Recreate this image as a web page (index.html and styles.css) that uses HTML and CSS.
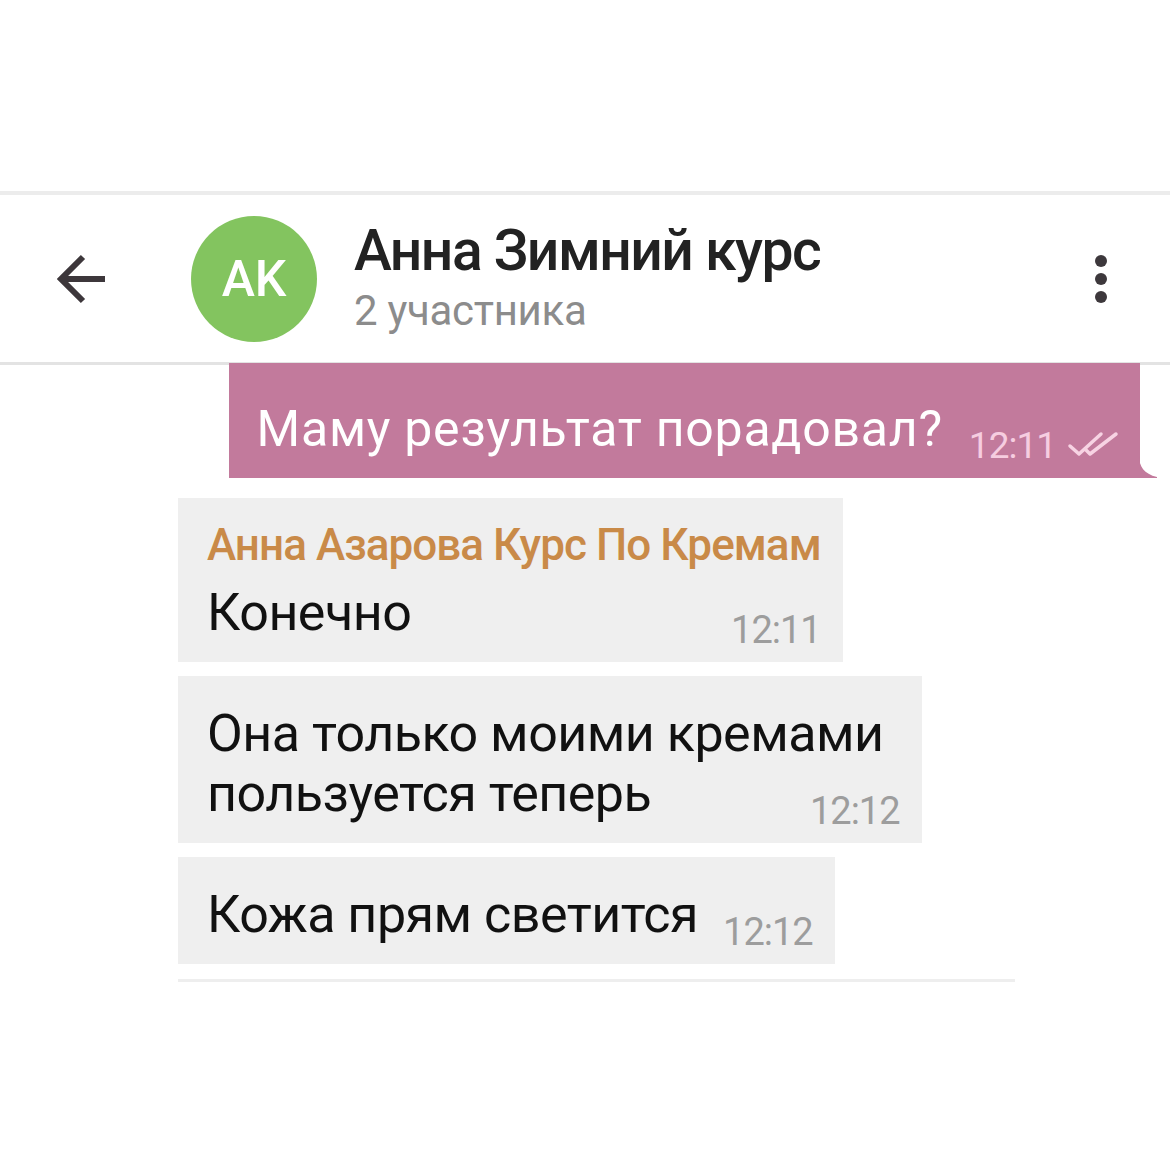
FILE: index.html
```html
<!DOCTYPE html>
<html lang="ru">
    <head>
        <meta charset="UTF-8">
        <meta name="viewport" content="width=device-width, initial-scale=1.0">
        <title>Анна Зимний курс</title>
        <link rel="stylesheet" href="styles.css">
    </head>
    <body>
        <div class="chat">
            <div class="header">
                <svg class="back" width="52" height="50" viewBox="0 0 52 50">
                    <path d="M50 25 H6 M28 3 L6 25 L28 47" fill="none" stroke="#3d373b" stroke-width="6" stroke-linejoin="miter"/>
                </svg>
                <div class="avatar">AK</div>
                <div class="title-block">
                    <h1>Анна Зимний курс</h1>
                    <p>2 участника</p>
                </div>
                <div class="menu">
                    <span></span>
                    <span></span>
                    <span></span>
                </div>
            </div>

            <div class="messages">
                <div class="bubble out">
                    <div class="text">Маму результат порадовал?</div>
                    <div class="time">12:11</div>
                    <svg class="checks" width="54" height="28" viewBox="0 0 54 28">
                        <path d="M4 15 L13 23 L35 3" fill="none" stroke="#f7d3e3" stroke-width="3.5" stroke-linecap="round" stroke-linejoin="round"/>
                        <path d="M20 19 L24 23 L50 3" fill="none" stroke="#f7d3e3" stroke-width="3.5" stroke-linecap="round" stroke-linejoin="round"/>
                    </svg>
                    <svg class="tail" width="18" height="22" viewBox="0 0 18 22">
                        <path d="M0 0 C0 10 5 18 18 21 L18 22 L0 22 Z" fill="#c27a9c"/>
                    </svg>
                </div>

                <div class="bubble in first">
                    <div class="sender">Анна Азарова Курс По Кремам</div>
                    <div class="row">
                        <div class="text">Конечно</div>
                        <div class="time">12:11</div>
                    </div>
                </div>

                <div class="bubble in">
                    <div class="row stacked">
                        <div class="text">Она только моими кремами<br>пользуется теперь</div>
                        <div class="time">12:12</div>
                    </div>
                </div>

                <div class="bubble in">
                    <div class="row">
                        <div class="text">Кожа прям светится</div>
                        <div class="time">12:12</div>
                    </div>
                </div>

                <div class="divider"></div>
            </div>
        </div>
    </body>
</html>
```

FILE: styles.css
```css
* {
    box-sizing: border-box;
    margin: 0;
}

body {
    background-color: #fff;
    font-family: Roboto, "Noto Sans", sans-serif;
    padding-top: 191px;
}

.header {
    display: flex;
    align-items: center;
    height: 174px;
    border-top: 4px solid #ececec;
    border-bottom: 3px solid #e3e3e3;
    padding-left: 55px;
    padding-right: 63px;
}

.back {
    flex-shrink: 0;
}

.avatar {
    width: 126px;
    height: 126px;
    border-radius: 50%;
    background-color: #83c45f;
    color: #fff;
    font-size: 50px;
    font-weight: 500;
    display: flex;
    align-items: center;
    justify-content: center;
    margin-left: 84px;
    flex-shrink: 0;
}

.title-block {
    margin-left: 37px;
    flex-grow: 1;
}

h1 {
    font-size: 57px;
    font-weight: 500;
    line-height: 60px;
    color: #222;
    letter-spacing: -1.5px;
}

.title-block p {
    font-size: 42px;
    line-height: 50px;
    color: #8c8c8c;
    margin-top: 5px;
    letter-spacing: -0.3px;
}

.menu {
    display: flex;
    flex-direction: column;
    gap: 6px;
}

.menu span {
    width: 12px;
    height: 12px;
    border-radius: 50%;
    background-color: #3d383c;
}

.messages {
    display: flex;
    flex-direction: column;
    align-items: flex-start;
    padding-left: 178px;
}

.bubble {
    position: relative;
}

.out {
    display: flex;
    align-items: flex-end;
    align-self: flex-end;
    margin-right: 30px;
    margin-top: -2px;
    margin-bottom: 20px;
    background-color: #c27a9c;
    padding: 36px 20px 19px 28px;
}

.out .text {
    font-size: 50px;
    line-height: 60px;
    color: #fff;
    letter-spacing: 0.75px;
}

.out .time {
    font-size: 37px;
    line-height: 26px;
    color: #f6cde0;
    margin-left: 26px;
    letter-spacing: -1px;
}

.checks {
    margin-left: 10px;
}

.tail {
    position: absolute;
    right: -17px;
    bottom: 0;
}

.in {
    background-color: #efefef;
    padding: 28px 22px 19px 29px;
    margin-bottom: 14px;
}

.in.first {
    padding-top: 22px;
}

.sender {
    font-size: 44px;
    font-weight: 500;
    line-height: 50px;
    color: #c98a48;
    margin-bottom: 13px;
    letter-spacing: -0.95px;
}

.row {
    display: flex;
    align-items: flex-end;
    justify-content: space-between;
}

.row.stacked {
    flex-direction: column;
}

.row.stacked .text {
    padding-right: 16px;
}

.row.stacked .time {
    margin-top: -26px;
}

.in .text {
    font-size: 52px;
    line-height: 60px;
    color: #111;
    letter-spacing: -0.5px;
}

.in .time {
    font-size: 38px;
    line-height: 26px;
    color: #9d9d9d;
    margin-left: 25px;
    letter-spacing: -1px;
}

.divider {
    width: 837px;
    height: 3px;
    background-color: #eeeeee;
    margin-top: 1px;
}
```
